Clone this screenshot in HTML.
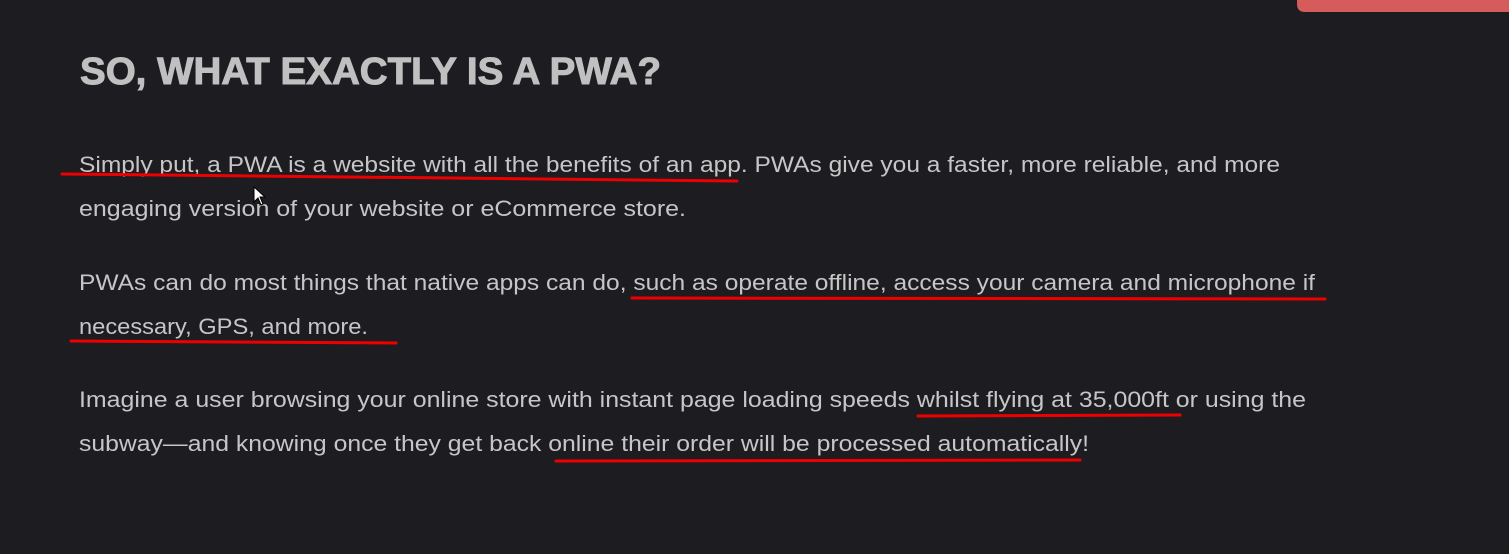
<!DOCTYPE html>
<html><head><meta charset="utf-8"><style>
html,body{margin:0;padding:0;background:#1d1c21;width:1509px;height:554px;overflow:hidden}
svg{position:absolute;left:0;top:0}
.b{font-family:"Liberation Sans",sans-serif;font-size:22px;fill:#c6c6c6}
.h{font-family:"Liberation Sans",sans-serif;font-size:38px;font-weight:bold;fill:#c0c0c0;stroke:#c0c0c0;stroke-width:1}
.u{stroke:#ee0000;stroke-width:3;fill:none;stroke-linecap:round}
</style></head><body>
<svg width="1509" height="554" viewBox="0 0 1509 554">
<path d="M1297 0 H1509 V12 H1305 Q1297 12 1297 4 Z" fill="#d65b5b"/>
<text class="h" x="80" y="84" textLength="581" lengthAdjust="spacingAndGlyphs">SO, WHAT EXACTLY IS A PWA?</text>
<text class="b" x="79" y="172" textLength="1201" lengthAdjust="spacingAndGlyphs">Simply put, a PWA is a website with all the benefits of an app. PWAs give you a faster, more reliable, and more</text>
<text class="b" x="79" y="216" textLength="607" lengthAdjust="spacingAndGlyphs">engaging version of your website or eCommerce store.</text>
<text class="b" x="79" y="290" textLength="1236" lengthAdjust="spacingAndGlyphs">PWAs can do most things that native apps can do, such as operate offline, access your camera and microphone if</text>
<text class="b" x="79" y="334" textLength="289" lengthAdjust="spacingAndGlyphs">necessary, GPS, and more.</text>
<text class="b" x="79" y="407" textLength="1227" lengthAdjust="spacingAndGlyphs">Imagine a user browsing your online store with instant page loading speeds whilst flying at 35,000ft or using the</text>
<text class="b" x="79" y="451" textLength="1010" lengthAdjust="spacingAndGlyphs">subway—and knowing once they get back online their order will be processed automatically!</text>
<path class="u" d="M62 174 Q300 176 737 181"/>
<path class="u" d="M632 298 Q900 297 1325 299"/>
<path class="u" d="M71 341 Q200 342 396 343"/>
<path class="u" d="M918 416 Q1050 415 1180 415"/>
<path class="u" d="M556 461 Q800 460 1080 460"/>
<path d="M254 187 V202 L258 198 L261 205 L263 204 L260 197 L265 197 Z" fill="#fff" stroke="#000" stroke-width="1"/>
</svg>
</body></html>
